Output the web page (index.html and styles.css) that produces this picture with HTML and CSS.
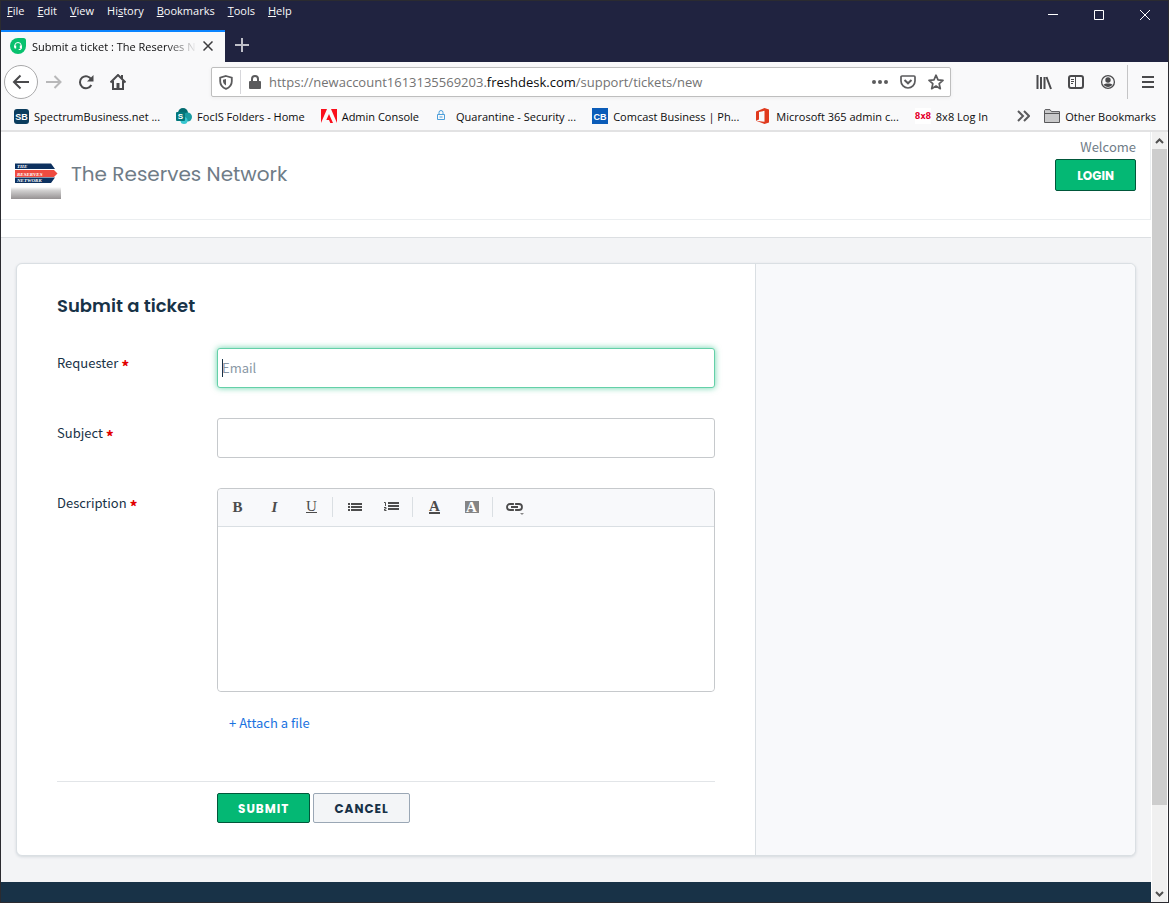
FILE: index.html
```
<!DOCTYPE html>
<html lang="en">
<head>
    <meta charset="UTF-8">
    <meta name="viewport" content="width=device-width, initial-scale=1.0">
    <title>Submit a ticket : The Reserves Network</title>
    <link rel="stylesheet" href="styles.css">
</head>
<body>

<div class="titlebar">
    <div class="title-top">
        <nav class="menu">
            <button type="button"><u>F</u>ile</button>
            <button type="button"><u>E</u>dit</button>
            <button type="button"><u>V</u>iew</button>
            <button type="button">Hi<u>s</u>tory</button>
            <button type="button"><u>B</u>ookmarks</button>
            <button type="button"><u>T</u>ools</button>
            <button type="button"><u>H</u>elp</button>
        </nav>
        <div class="window-buttons">
            <button type="button" aria-label="Minimize"><svg width="10" height="10"><path d="M0 4.500h10" stroke="#fff"/></svg></button>
            <button type="button" aria-label="Maximize"><svg width="10" height="10"><path d="M.5.5h9v9h-9z" stroke="#fff" fill="none"/></svg></button>
            <button type="button" aria-label="Close"><svg width="10" height="10"><path d="M0 0l10 10M10 0L0 10" stroke="#fff"/></svg></button>
        </div>
    </div>
    <div class="tabs">
        <div class="tab">
            <svg width="16" height="16" viewBox="0 0 16 16"><path d="M8 0h5.500a2.500 2.500 0 0 1 2.500 2.500V8a8 8 0 1 1-8-8z" fill="#08c16e"/><path d="M4.700 9V7.800a3.300 3.300 0 0 1 6.600 0v2.400c0 .8-.5 1.300-1.300 1.300H8.700" fill="none" stroke="#fff"/><path d="M4.200 7.600h2v3h-1a1 1 0 0 1-1-1zM9.800 7.600h2v3h-2z" fill="#fff"/></svg>
            <span class="tab-title">Submit a ticket : The Reserves N</span>
            <button type="button" aria-label="Close tab"><svg width="10" height="10"><path d="M.5.5l9 9M9.500.5l-9 9" stroke="#3c3c3e" stroke-width="1.500"/></svg></button>
        </div>
        <button type="button" class="new-tab" aria-label="New tab"><svg width="14" height="14"><path d="M7 0v14M0 7h14" stroke="#bfc0c9" stroke-width="2"/></svg></button>
    </div>
</div>

<div class="toolbar">
    <div class="nav-buttons">
        <button type="button" class="back" aria-label="Back"><svg width="18" height="16" viewBox="0 0 18 16"><path d="M17 8H2M8.500 1.500L2 8l6.500 6.500" fill="none" stroke="#4a4a4c" stroke-width="2"/></svg></button>
        <button type="button" aria-label="Forward"><svg width="16" height="16" viewBox="0 0 16 16"><path d="M0 8h14M8.500 2l6 6-6 6" fill="none" stroke="#b8b8b9" stroke-width="2"/></svg></button>
        <button type="button" aria-label="Reload"><svg width="16" height="16" viewBox="0 0 16 16"><path d="M13.300 5.500A6 6 0 1 0 13.300 11" fill="none" stroke="#4a4a4c" stroke-width="2"/><path d="M15.500 1v6.500H9z" fill="#4a4a4c"/></svg></button>
        <button type="button" aria-label="Home"><svg width="16" height="16" viewBox="0 0 16 16"><path d="M.5 8.500L8 1l7.500 7.500M3 7v8h10V7M12 1v4" fill="none" stroke="#4a4a4c" stroke-width="2"/><path d="M6.500 9h3v6h-3z" fill="#4a4a4c"/></svg></button>
    </div>
    <div class="address">
        <svg class="shield" width="14" height="15" viewBox="0 0 14 15"><path d="M7 1l5.800 1.600v3.600c0 3.700-2.300 6.300-5.800 7.700-3.500-1.400-5.800-4-5.800-7.700V2.600z" fill="none" stroke="#5b5b5d" stroke-width="1.800"/><path d="M7 4v6.500C5 9.300 4 7.800 4 6V4.800z" fill="#5b5b5d"/></svg>
        <svg class="lock" width="12" height="14" viewBox="0 0 12 14"><path d="M3 7V4a3 3 0 0 1 6 0v3" fill="none" stroke="#5b5b5d" stroke-width="2"/><rect y="6" width="12" height="8" rx="1" fill="#5b5b5d"/></svg>
        <span class="url">https://newaccount1613135569203.<b>freshdesk.com</b>/support/tickets/new</span>
        <svg width="16" height="16" viewBox="0 0 16 16" fill="#5b5b5d"><circle cx="2" cy="8" r="2"/><circle cx="8" cy="8" r="2"/><circle cx="14" cy="8" r="2"/></svg>
        <svg width="16" height="16" viewBox="0 0 16 16"><path d="M2 2h12a1 1 0 0 1 1 1v4a7 7 0 0 1-14 0V3a1 1 0 0 1 1-1z" fill="none" stroke="#5b5b5d" stroke-width="1.700"/><path d="M4.500 6L8 9.300 11.500 6" fill="none" stroke="#5b5b5d" stroke-width="2"/></svg>
        <svg width="16" height="16" viewBox="0 0 16 16"><path d="M8 1.200l2 4.600 5 .5-3.800 3.400 1.100 5L8 12.100l-4.300 2.600 1.100-5L1 6.300l5-.5z" fill="none" stroke="#5b5b5d" stroke-width="1.700" stroke-linejoin="round"/></svg>
    </div>
    <div class="tools">
        <button type="button" aria-label="Library"><svg width="16" height="16" viewBox="0 0 16 16"><path d="M1.500 1v14M5 3v12M8.500 3v12M10.500 3L15 15" stroke="#4a4a4c" stroke-width="2"/></svg></button>
        <button type="button" aria-label="Sidebars"><svg width="16" height="16" viewBox="0 0 16 16"><rect x="1" y="2" width="14" height="12" rx="2" fill="none" stroke="#4a4a4c" stroke-width="2"/><path d="M7.500 2v12M3 5.500h3M3 7.500h3M3 9.500h2" stroke="#4a4a4c"/></svg></button>
        <button type="button" aria-label="Account"><svg width="16" height="16" viewBox="0 0 16 16"><circle cx="8" cy="8" r="6.400" fill="none" stroke="#4a4a4c" stroke-width="1.300"/><circle cx="8" cy="6" r="2.700" fill="#4a4a4c"/><path d="M3.500 10.500c1.500-1.500 7.500-1.500 9 0-1.800 3.200-7.200 3.200-9 0z" fill="#4a4a4c"/></svg></button>
        <button type="button" class="main-menu" aria-label="Menu"><svg width="12" height="12"><path d="M0 1h12M0 6h12M0 11h12" stroke="#4a4a4c" stroke-width="2"/></svg></button>
    </div>
</div>

<nav class="bookmarks">
    <a href="#"><svg width="15" height="15"><rect width="15" height="15" rx="3" fill="#0b3d5e"/><text x="7.500" y="11" class="ico sb">SB</text></svg>SpectrumBusiness.net ...</a>
    <a href="#"><svg width="16" height="16"><circle cx="7" cy="5" r="5" fill="#036c70"/><circle cx="11.500" cy="9" r="4.500" fill="#1a9ba1"/><circle cx="8" cy="12.500" r="3.500" fill="#37c6d0"/><rect y="4" width="9" height="9" rx="1" fill="#03787c"/><text x="4.500" y="11" class="ico">S</text></svg>FocIS Folders - Home</a>
    <a href="#"><svg width="16" height="14" viewBox="0 0 16 14"><path d="M0 0h6L0 14zM10 0h6v14zM8 5l4 9H9.300L8 11H5.300z" fill="#fa0f1c"/></svg>Admin Console</a>
    <a href="#"><svg width="16" height="16" viewBox="0 0 16 16"><path d="M4 6V4.500a2 2 0 0 1 4 0V6M2.500 6.500h7v5h-7zM4.500 9h3" fill="none" stroke="#4d9fda"/></svg>Quarantine - Security ...</a>
    <a href="#"><svg width="16" height="16"><rect width="16" height="16" fill="#0b5cb8"/><text x="8" y="12" class="ico cb">CB</text></svg>Comcast Business | Ph...</a>
    <a href="#"><svg width="16" height="16" viewBox="0 0 16 16"><path d="M1 3.500L9.500 0 14 1.500v13L9.500 16 1 12.700l8.500 1V2.800L4 4v7.500l-3 1.200z" fill="#e03a1e"/></svg>Microsoft 365 admin c...</a>
    <a href="#"><svg width="16" height="16"><rect width="16" height="16" fill="#fff"/><text x="8" y="11" class="ico eight">8x8</text></svg>8x8 Log In</a>
    <div class="bookmarks-end">
        <button type="button" aria-label="More bookmarks"><svg width="13" height="12" viewBox="0 0 13 12"><path d="M1 1l5 5-5 5M7 1l5 5-5 5" fill="none" stroke="#5b5b5d" stroke-width="2"/></svg></button>
        <a href="#"><svg width="16" height="14" viewBox="0 0 16 14"><path d="M.5 13.500V1.500l.7-.9H6l1.500 2h8v10.900z" fill="#c9c9ca" stroke="#58585a"/><path d="M1 4.500h14.500" stroke="#58585a"/></svg>Other Bookmarks</a>
    </div>
</nav>

<div class="viewport">
    <div class="page">
        <header class="header">
            <a href="#" class="brand">
                <svg width="50" height="50" viewBox="0 0 50 50">
                    <defs><linearGradient id="fade" x2="0" y2="1"><stop offset="0" stop-color="#fff"/><stop offset=".3" stop-color="#d0cfcf"/><stop offset="1" stop-color="#969293"/></linearGradient></defs>
                    <path d="M0 38h50v12H0z" fill="url(#fade)"/>
                    <path d="M4 14.500h36l4 5.500H4zM4 28.500h40L40 34H4z" fill="#0d315f"/>
                    <path d="M4 21h39l3.500 3.500L43 28H4z" fill="#ef4b40"/>
                    <text x="6" y="19">THE</text>
                    <text x="6" y="26.500">RESERVES</text>
                    <text x="6" y="33">NETWORK</text>
                </svg>
                <span>The Reserves Network</span>
            </a>
            <div class="account">
                <span>Welcome</span>
                <a href="#" class="login">LOGIN</a>
            </div>
        </header>
        <div class="subnav"></div>

        <main class="card">
            <form class="ticket">
                <h1>Submit a ticket</h1>
                <div class="row">
                    <label for="email">Requester <span class="star">*</span></label>
                    <input type="text" id="email" class="focused" placeholder="Email">
                </div>
                <div class="row">
                    <label for="subject">Subject <span class="star">*</span></label>
                    <input type="text" id="subject">
                </div>
                <div class="row">
                    <label for="description">Description <span class="star">*</span></label>
                    <div class="editor">
                        <div class="editor-bar">
                            <button type="button" aria-label="Bold"><b>B</b></button>
                            <button type="button" aria-label="Italic"><b><i>I</i></b></button>
                            <button type="button" aria-label="Underline"><span class="under">U</span></button>
                            <button type="button" class="split" aria-label="Bulleted list"><svg width="14" height="8"><path d="M0 1h2M0 4h2M0 7h2M3 1h11M3 4h11M3 7h11" stroke="#4c4c4c" stroke-width="2"/></svg></button>
                            <button type="button" aria-label="Numbered list"><svg width="15" height="9"><path d="M4 1h11M4 4h11M4 7h11" stroke="#4c4c4c" stroke-width="2"/><path d="M0 .5h1.500V4M0 5.500h2v1.500H.5v1.500h2" fill="none" stroke="#4c4c4c"/></svg></button>
                            <button type="button" class="split" aria-label="Text color"><span class="color">A</span></button>
                            <button type="button" aria-label="Highlight"><span class="mark">A</span></button>
                            <button type="button" class="split" aria-label="Link"><svg width="18" height="16" viewBox="0 0 18 16"><path d="M7 6V5H4a3 3 0 0 0 0 6h3v-1M10 6V5h3a3 3 0 0 1 0 6h-3v-1M5 8h7" fill="none" stroke="#4c4c4c" stroke-width="1.800"/><path d="M14 14h4l-2 2z" fill="#888"/></svg></button>
                        </div>
                        <textarea id="description"></textarea>
                    </div>
                </div>
                <a href="#" class="attach">+ Attach a file</a>
                <div class="actions">
                    <button type="submit" class="submit">SUBMIT</button>
                    <button type="button" class="cancel">CANCEL</button>
                </div>
            </form>
            <aside class="side"></aside>
        </main>
        <footer class="footer"></footer>
    </div>
    <div class="scrollbar">
        <button type="button" aria-label="Scroll up"><svg width="9" height="6"><path d="M1 5l3.500-3.500L8 5" fill="none" stroke="#505050" stroke-width="2"/></svg></button>
        <div class="thumb"></div>
        <button type="button" aria-label="Scroll down"><svg width="9" height="6"><path d="M1 1l3.500 3.500L8 1" fill="none" stroke="#505050" stroke-width="2"/></svg></button>
    </div>
</div>

</body>
</html>
```
FILE: styles.css
```
* {
    box-sizing: border-box;
}
body {
    margin: 0;
    min-height: 100vh;
    display: flex;
    flex-direction: column;
    border: 1px solid #2b2b30;
    font-family: "Noto Sans CJK SC", sans-serif;
    font-size: 13px;
    color: #183247;
    background: #f9f9fa;
}
button {
    margin: 0;
    padding: 0;
    border: none;
    background: none;
    color: inherit;
    font: inherit;
}
a {
    color: inherit;
    text-decoration: none;
}
svg {
    display: block;
    flex: none;
}

/* browser window */
.titlebar, .bookmarks {
    font-family: "Open Sans", sans-serif;
    font-size: 11px;
}
.titlebar {
    height: 61px;
    background: #202340;
    color: #f9f9fa;
}
.title-top {
    height: 29px;
    display: flex;
    justify-content: space-between;
}
.menu {
    display: flex;
    gap: 13px;
    height: 20px;
    padding: 0 0 2px 6px;
}
.window-buttons {
    display: flex;
    height: 27px;
}
.window-buttons button {
    width: 46px;
    display: grid;
    place-items: center;
}
.tabs {
    display: flex;
    height: 32px;
}
.tab {
    display: flex;
    align-items: center;
    gap: 6px;
    width: 224px;
    padding: 0 12px 2px 9px;
    border-top: 2px solid #0a84ff;
    background: #f9f9fa;
    color: #0c0c0d;
}
.tab-title {
    flex: 1;
    overflow: hidden;
    white-space: nowrap;
    mask-image: linear-gradient(to left, transparent, #000 32px);
}
.new-tab {
    width: 34px;
    height: 30px;
    display: grid;
    place-items: center;
}
.toolbar {
    display: flex;
    align-items: center;
    height: 40px;
    padding-left: 3px;
}
.nav-buttons {
    display: flex;
    width: 207px;
}
.nav-buttons button {
    width: 32px;
    height: 34px;
    display: grid;
    place-items: center;
}
.nav-buttons .back {
    width: 34px;
    border: 1px solid #a9a9aa;
    border-radius: 50%;
    background: #fff;
}
.address {
    flex: 1;
    display: flex;
    align-items: center;
    gap: 12px;
    height: 30px;
    padding: 0 6px 0 7px;
    border: 1px solid #bebebe;
    border-radius: 2px;
    background: #fff;
    box-shadow: 0 1px 4px rgba(0, 0, 0, 0.06);
}
.lock {
    width: 21px;
    height: 24px;
    margin: 0 -4px 0 -5px;
    padding-left: 8px;
    border-left: 1px solid #d7d7db;
}
.url {
    flex: 1;
    font-family: "Open Sans", sans-serif;
    font-size: 13px;
    color: #737373;
}
.url b {
    font-weight: 400;
    color: #0c0c0d;
}
.tools {
    display: flex;
    width: 217px;
    justify-content: flex-end;
}
.tools button {
    width: 32px;
    height: 34px;
    display: grid;
    place-items: center;
}
.tools .main-menu {
    width: 41px;
    margin-left: 3px;
    border-left: 1px solid #c5c5c6;
}
.bookmarks {
    display: flex;
    align-items: center;
    gap: 16px;
    height: 30px;
    padding: 0 12px 0 13px;
    border-bottom: 2px solid #e2e2e3;
    color: #0c0c0d;
    white-space: nowrap;
}
.bookmarks a {
    display: flex;
    align-items: center;
    gap: 5px;
}
.bookmarks-end {
    display: flex;
    align-items: center;
    gap: 14px;
    margin-left: auto;
}
.ico {
    font: bold 8px "Liberation Sans", sans-serif;
    fill: #fff;
    text-anchor: middle;
}
.sb, .cb {
    font-size: 9px;
}
.eight {
    font-family: "DejaVu Sans", sans-serif;
    fill: #e4002b;
}

/* support portal */
.viewport {
    flex: 1;
    display: flex;
    background: #fff;
}
.page {
    flex: 1;
    display: flex;
    flex-direction: column;
    background: #f3f4f6;
}
.header {
    display: flex;
    justify-content: space-between;
    height: 88px;
    padding: 4px 14px 0 10px;
    border-right: 1px solid #ebeef0;
    border-bottom: 1px solid #ebeef0;
    background: #fff;
}
.brand {
    display: flex;
    align-items: center;
    gap: 10px;
    height: 76px;
    font-family: Poppins, sans-serif;
    font-size: 20px;
    color: #6f7c87;
}
.brand text {
    font: italic bold 5px "Liberation Serif", serif;
    fill: #fff;
}
.account {
    display: flex;
    flex-direction: column;
    align-items: flex-end;
    gap: 1px;
    line-height: 22px;
    color: #6f7c87;
}
.login {
    padding: 5px 21px 3px;
    border: 1px solid #00573a;
    border-radius: 2px;
    background: #04b874;
    color: #fff;
    font: bold 12px/22px Poppins, sans-serif;
}
.subnav {
    height: 18px;
    border-bottom: 1px solid #dcdfe2;
    background: #fff;
}
.card {
    display: flex;
    margin: 25px 15px 26px;
    border: 1px solid #dadfe3;
    border-radius: 6px;
    background: #fff;
    box-shadow: 0 1px 3px rgba(24, 50, 71, 0.14);
}
.ticket {
    width: 66%;
    padding: 28px 40px 32px;
}
.side {
    flex: 1;
    border-left: 1px solid #dadfe3;
    border-radius: 0 6px 6px 0;
    background: #f8f9fb;
}
.ticket h1 {
    margin: 0 0 28px;
    font: 600 18px/28px Poppins, sans-serif;
}
.row {
    display: flex;
    align-items: flex-start;
    margin-bottom: 30px;
}
.row label {
    width: 160px;
    padding-top: 5px;
    line-height: 20px;
}
.star {
    color: #e20000;
    font-size: 16px;
    font-weight: bold;
    line-height: 12px;
    vertical-align: -5px;
}
.row input {
    flex: 1;
    height: 40px;
    padding: 0 4px 2px;
    border: 1px solid #c6c9cc;
    border-radius: 3px;
    outline: none;
    background: #fff;
    color: #183247;
    font: inherit;
}
/* the text cursor is part of the background */
.row .focused {
    border-color: #64d0a8;
    background: linear-gradient(#183247, #183247) 4px 10px / 1px 18px no-repeat #fff;
    box-shadow: 0 0 6px rgba(4, 184, 116, 0.6);
}
.row input::placeholder {
    color: #8a98a5;
}
.editor {
    flex: 1;
    border: 1px solid #c6c9cc;
    border-radius: 4px;
}
.editor-bar {
    display: flex;
    align-items: center;
    height: 38px;
    padding: 0 0 2px 1px;
    border-bottom: 1px solid #dadfe3;
    border-radius: 4px 4px 0 0;
    background: #f8f9fb;
    font: 15px/16px "Liberation Serif", serif;
    color: #4c4c4c;
}
.editor-bar button {
    width: 37px;
    height: 20px;
    display: grid;
    place-items: center;
}
.editor-bar .split {
    width: 41px;
    margin-left: 2px;
    padding-left: 3px;
    border-left: 1px solid #dadfe3;
}
.under, .color {
    line-height: 12px;
    border-bottom: 1px solid #4c4c4c;
}
.color {
    border-width: 2px;
    font-weight: bold;
}
.mark {
    width: 14px;
    line-height: 12px;
    background: #858585;
    color: #fff;
    font-weight: bold;
}
.editor textarea {
    display: block;
    width: 100%;
    height: 164px;
    border: none;
    border-radius: 4px;
    outline: none;
    resize: none;
    font: inherit;
}
.attach {
    display: block;
    margin: -9px 0 0 172px;
    padding-bottom: 48px;
    line-height: 20px;
    color: #1a73e0;
}
.actions {
    display: flex;
    gap: 3px;
    padding: 11px 0 0 160px;
    border-top: 1px solid #e2e5e8;
}
.actions button {
    height: 30px;
    padding: 2px 20px 0;
    border: 1px solid #00573a;
    border-radius: 2px;
    background: #04b874;
    color: #fff;
    font: bold 12px Poppins, sans-serif;
    letter-spacing: 1px;
}
.actions .cancel {
    border-color: #9aa7b5;
    background: #f3f5f7;
    color: #183247;
}
.footer {
    flex: 1;
    background: #183247;
}
.scrollbar {
    display: flex;
    flex-direction: column;
    width: 17px;
    border: 0 solid #fff;
    border-width: 0 1px;
    background: #f0f0f0;
}
.scrollbar button {
    height: 17px;
    display: grid;
    place-items: center;
}
.thumb {
    flex: 1;
    margin-bottom: 80px;
    background: #cdcdcd;
}
```
